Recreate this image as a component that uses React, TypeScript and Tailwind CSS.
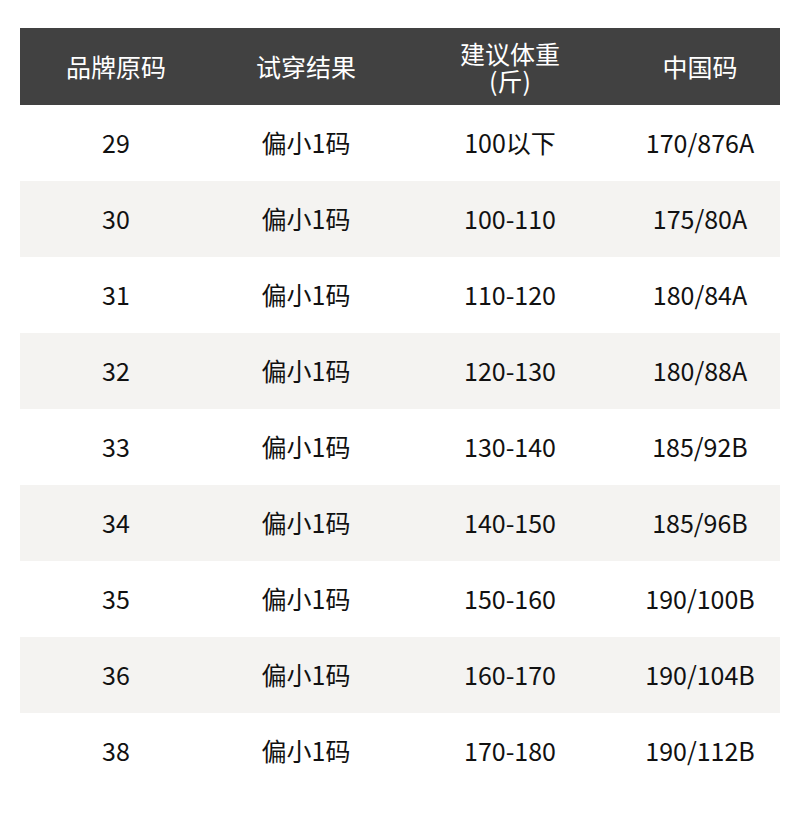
import React from 'react';

const ROWS = [
  ['29', '偏小1码', '100以下', '170/876A'],
  ['30', '偏小1码', '100-110', '175/80A'],
  ['31', '偏小1码', '110-120', '180/84A'],
  ['32', '偏小1码', '120-130', '180/88A'],
  ['33', '偏小1码', '130-140', '185/92B'],
  ['34', '偏小1码', '140-150', '185/96B'],
  ['35', '偏小1码', '150-160', '190/100B'],
  ['36', '偏小1码', '160-170', '190/104B'],
  ['38', '偏小1码', '170-180', '190/112B'],
];

const cols = 'grid grid-cols-[192px_188px_220px_160px]';

const App: React.FC = () => {
  return (
    <div
      className="w-[800px] h-[817px] bg-white pt-[28px] px-[20px]"
      style={{ fontFamily: '"Noto Sans CJK SC", "Noto Sans", sans-serif' }}
    >
      {/* Header */}
      <div className={`${cols} h-[77px] bg-[#414141] text-white text-[25px] font-normal items-center text-center`}>
        <div>品牌原码</div>
        <div>试穿结果</div>
        <div className="flex flex-col leading-[27px]">
          <span>建议体重</span>
          <span>(斤)</span>
        </div>
        <div>中国码</div>
      </div>

      {/* Rows */}
      {ROWS.map((r, idx) => (
        <div
          key={idx}
          className={`${cols} h-[76px] items-center text-center text-[25px] font-normal text-[#111111] ${idx % 2 === 1 ? 'bg-[#f4f3f1]' : 'bg-white'}`}
        >
          {r.map((c, i) => (
            <div key={i}>{c}</div>
          ))}
        </div>
      ))}
    </div>
  );
};

export default App;
